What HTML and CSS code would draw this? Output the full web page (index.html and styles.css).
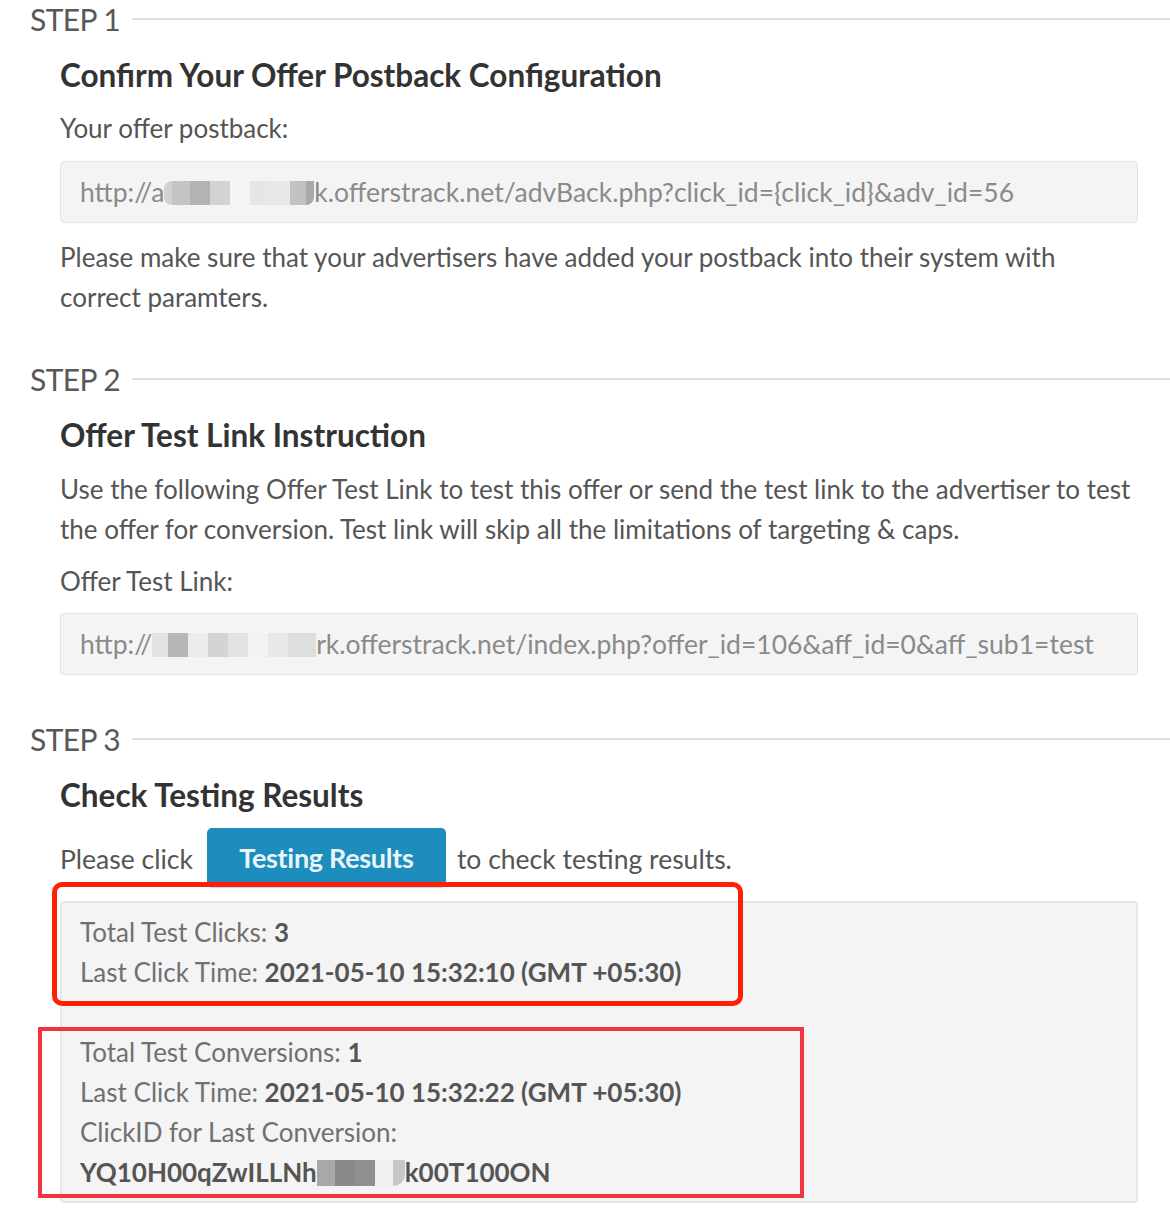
FILE: index.html
```html
<!DOCTYPE html>
<html lang="en">
<head>
<meta charset="utf-8">
<title>Offer Test</title>
<link rel="stylesheet" href="styles.css">
</head>
<body>
<div class="page">
  <section class="step step-1">
    <div class="legend"><span class="legend-text">STEP 1</span><span class="legend-line"></span></div>
    <div class="step-body">
      <h3 class="title">Confirm Your Offer Postback Configuration</h3>
      <p class="label">Your offer postback:</p>
      <div class="field">http://a<span class="redact redact-a"></span>k.offerstrack.net/advBack.php?click_id={click_id}&amp;adv_id=56</div>
      <p class="text">Please make sure that your advertisers have added your postback into their system with correct paramters.</p>
    </div>
  </section>

  <section class="step step-2">
    <div class="legend"><span class="legend-text">STEP 2</span><span class="legend-line"></span></div>
    <div class="step-body">
      <h3 class="title">Offer Test Link Instruction</h3>
      <p class="text">Use the following Offer Test Link to test this offer or send the test link to the advertiser to test the offer for conversion. Test link will skip all the limitations of targeting &amp; caps.</p>
      <p class="label label-2">Offer Test Link:</p>
      <div class="field">http://<span class="redact redact-b"></span>rk.offerstrack.net/index.php?offer_id=106&amp;aff_id=0&amp;aff_sub1=test</div>
    </div>
  </section>

  <section class="step step-3">
    <div class="legend"><span class="legend-text">STEP 3</span><span class="legend-line"></span></div>
    <div class="step-body">
      <h3 class="title">Check Testing Results</h3>
      <div class="click-row">
        <span class="row-text">Please click</span>
        <button class="btn" type="button">Testing Results</button>
        <span class="row-text">to check testing results.</span>
      </div>
      <div class="results">
        <div class="group">
          <div class="line">Total Test Clicks: <b>3</b></div>
          <div class="line">Last Click Time: <b>2021-05-10 15:32:10 (GMT +05:30)</b></div>
        </div>
        <div class="group group-2">
          <div class="line">Total Test Conversions: <b>1</b></div>
          <div class="line">Last Click Time: <b>2021-05-10 15:32:22 (GMT +05:30)</b></div>
          <div class="line">ClickID for Last Conversion:</div>
          <div class="line"><b>YQ10H00qZwILLNh<span class="redact redact-c"></span>k00T100ON</b></div>
        </div>
      </div>
    </div>
  </section>

  <div class="mark mark-1"></div>
  <div class="mark mark-2"></div>
</div>
</body>
</html>
```

FILE: styles.css
```css
html, body {
  margin: 0;
  padding: 0;
  background: #ffffff;
}

body {
  font-family: Lato, "Open Sans", sans-serif;
  color: #595959;
}

.page {
  position: relative;
  width: 1170px;
  min-height: 1212px;
  padding-left: 30px;
  box-sizing: border-box;
}

.step-2 { margin-top: 43px; }
.step-3 { margin-top: 45px; }

.legend {
  display: flex;
  align-items: center;
  height: 38px;
  gap: 12px;
}

.legend-text {
  font-size: 30px;
  font-weight: 400;
  color: #585858;
  line-height: 38px;
  letter-spacing: -0.6px;
}

.legend-line {
  flex: 1;
  height: 2px;
  background: #dedede;
}

.step-body {
  padding-left: 30px;
  padding-right: 32px;
}

.title {
  margin: 17px 0 0;
  font-size: 31.5px;
  line-height: 40px;
  font-weight: 700;
  color: #333333;
}

.label {
  margin: 13px 0 0;
  font-size: 26px;
  line-height: 40px;
  color: #555555;
}

.label-2 { margin-top: 12px; }

.field {
  margin-top: 13px;
  height: 62px;
  box-sizing: border-box;
  border: 1px solid #e4e4e4;
  border-radius: 4px;
  background: #f4f4f4;
  padding: 0 19px;
  font-size: 26.5px;
  line-height: 60px;
  color: #8a8a8a;
  white-space: nowrap;
  overflow: hidden;
}

.step-2 .field { margin-top: 12px; }

.text {
  margin: 14px 0 0;
  font-size: 26px;
  line-height: 40px;
  color: #555555;
}

.redact {
  display: inline-block;
  vertical-align: middle;
  height: 24px;
  margin-top: -4px;
}

.redact-a {
  width: 150px;
  background: linear-gradient(to right,
    #d2d2d2 0 8px, #c4c4c4 8px 26px, #b3b3b3 26px 46px, #d3d3d3 46px 66px,
    #f4f4f4 66px 86px, #e6e6e6 86px 106px, #e8e8e8 106px 126px, #c2c2c2 126px 142px, #a9a9a9 142px 150px);
  border-radius: 8px 0 8px 8px;
}

.redact-b {
  width: 164px;
  background: linear-gradient(to right,
    #e2e2e2 0 16px, #b7b7b7 16px 36px, #ececec 36px 56px, #d4d4d4 56px 76px,
    #e2e2e2 76px 96px, #f2f2f2 96px 116px, #e8e8e8 116px 136px, #dedede 136px 164px);
}

.redact-c {
  width: 88px;
  height: 26px;
  background: linear-gradient(to right,
    #a8a8a8 0 18px, #8a8a8a 18px 38px, #909090 38px 58px, #f0f0f0 58px 76px, #c8c8c8 76px 88px);
  border-radius: 0 0 12px 0;
}

.click-row {
  margin-top: 13px;
  display: flex;
  align-items: center;
  height: 58px;
}

.row-text {
  font-size: 26.5px;
  line-height: 40px;
  color: #555555;
  margin-top: 4px;
}

.btn {
  margin: 0 11px 0 14px;
  width: 239px;
  height: 58px;
  border: none;
  border-radius: 5px;
  background: #1c8dbd;
  box-shadow: 0 2px 0 #c6e0ec;
  color: #eaf5fa;
  font-family: Lato, "Open Sans", sans-serif;
  font-size: 27px;
  font-weight: 700;
  letter-spacing: -0.3px;
  padding: 0;
}

.results {
  margin-top: 15px;
  box-sizing: border-box;
  height: 302px;
  border: 2px solid #e6e6e6;
  border-radius: 4px;
  background: #f4f4f4;
  padding: 9px 18px 0;
}

.group-2 { margin-top: 40px; }

.line {
  font-size: 26px;
  line-height: 40px;
  color: #707070;
  white-space: nowrap;
}

.line b {
  color: #555555;
  font-weight: 700;
}

.mark {
  position: absolute;
  box-sizing: border-box;
  pointer-events: none;
}

.mark-1 {
  left: 52px;
  top: 882px;
  width: 691px;
  height: 124px;
  border: 5px solid #ff2006;
  border-radius: 10px;
}

.mark-2 {
  left: 38px;
  top: 1027px;
  width: 766px;
  height: 171px;
  border: 4px solid #ef3640;
}
```
